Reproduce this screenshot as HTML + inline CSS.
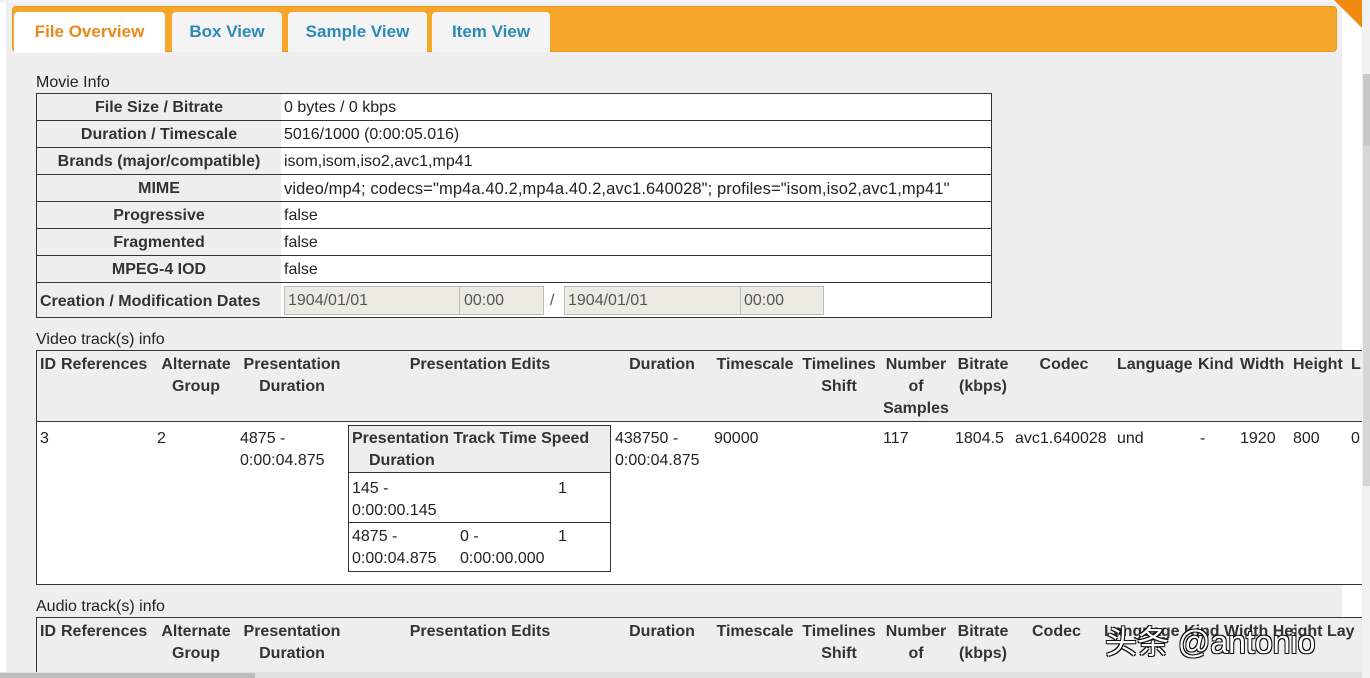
<!DOCTYPE html>
<html><head><meta charset="utf-8"><style>
*{margin:0;padding:0;box-sizing:border-box}
html,body{width:1370px;height:678px;overflow:hidden}
body{background:#fff;font-family:"Liberation Sans","DejaVu Sans",sans-serif;font-size:16px;color:#222;position:relative}
.a{position:absolute;white-space:nowrap;line-height:22px}
.b{font-weight:bold;color:#333}
.c{text-align:center}
.box{position:absolute}
</style></head><body>
<div class="box" style="left:6px;top:0;width:1336px;height:678px;background:#eeeeee"></div>
<div class="box" style="left:0;top:0;width:1370px;height:3px;background:#f4f4f4"></div>
<div class="box" style="left:12px;top:6px;width:1325px;height:46px;background:#f5a62b;border-radius:4px;border:1px solid #e59a20"></div>
<div class="box" style="left:14px;top:12px;width:151px;height:41px;background:#fff;border-radius:4px 4px 0 0"></div>
<div class="box" style="left:172px;top:12px;width:110px;height:40px;background:#f4f4f4;border-radius:4px 4px 0 0"></div>
<div class="box" style="left:288px;top:12px;width:139px;height:40px;background:#f4f4f4;border-radius:4px 4px 0 0"></div>
<div class="box" style="left:432px;top:12px;width:118px;height:40px;background:#f4f4f4;border-radius:4px 4px 0 0"></div>
<div class="a b" style="left:14px;width:151px;top:21px;text-align:center;color:#e8891a;font-size:17px">File Overview</div>
<div class="a b" style="left:172px;width:110px;top:21px;text-align:center;color:#2b8ab8;font-size:17px">Box View</div>
<div class="a b" style="left:288px;width:139px;top:21px;text-align:center;color:#2b8ab8;font-size:17px">Sample View</div>
<div class="a b" style="left:432px;width:118px;top:21px;text-align:center;color:#2b8ab8;font-size:17px">Item View</div>
<svg class="box" style="left:1330px;top:0" width="32" height="30"><polygon points="4,0 32,0 32,28" fill="#f08a10"/></svg>

<div class="a" style="left:36px;top:72px">Movie Info</div>
<div class="box" style="left:36px;top:93px;width:956px;height:225px;border:1px solid #333;background:#fff"></div>
<div class="box" style="left:37px;top:94px;width:244px;height:223px;background:#eee"></div>
<div class="box" style="left:36px;top:120px;width:956px;height:1px;background:#333"></div>
<div class="box" style="left:36px;top:147px;width:956px;height:1px;background:#333"></div>
<div class="box" style="left:36px;top:174px;width:956px;height:1px;background:#333"></div>
<div class="box" style="left:36px;top:201px;width:956px;height:1px;background:#333"></div>
<div class="box" style="left:36px;top:228px;width:956px;height:1px;background:#333"></div>
<div class="box" style="left:36px;top:255px;width:956px;height:1px;background:#333"></div>
<div class="box" style="left:36px;top:282px;width:956px;height:1px;background:#333"></div>
<div class="a b c" style="left:36px;width:246px;top:97px">File Size / Bitrate</div>
<div class="a b c" style="left:36px;width:246px;top:124px">Duration / Timescale</div>
<div class="a b c" style="left:36px;width:246px;top:151px">Brands (major/compatible)</div>
<div class="a b c" style="left:36px;width:246px;top:178px">MIME</div>
<div class="a b c" style="left:36px;width:246px;top:205px">Progressive</div>
<div class="a b c" style="left:36px;width:246px;top:232px">Fragmented</div>
<div class="a b c" style="left:36px;width:246px;top:259px">MPEG-4 IOD</div>
<div class="a b" style="left:40px;top:291px">Creation / Modification Dates</div>
<div class="a" style="left:284px;top:97px">0 bytes / 0 kbps</div>
<div class="a" style="left:284px;top:124px">5016/1000 (0:00:05.016)</div>
<div class="a" style="left:284px;top:151px">isom,isom,iso2,avc1,mp41</div>
<div class="a" style="left:284px;top:178px;font-size:16.5px;letter-spacing:0.1px">video/mp4; codecs="mp4a.40.2,mp4a.40.2,avc1.640028"; profiles="isom,iso2,avc1,mp41"</div>
<div class="a" style="left:284px;top:205px">false</div>
<div class="a" style="left:284px;top:232px">false</div>
<div class="a" style="left:284px;top:259px">false</div>
<div class="box" style="left:284px;top:286px;width:176px;height:29px;background:#ebebe4;border:1px solid #bbb"></div>
<div class="box" style="left:459px;top:286px;width:85px;height:29px;background:#ebebe4;border:1px solid #bbb"></div>
<div class="box" style="left:564px;top:286px;width:177px;height:29px;background:#ebebe4;border:1px solid #bbb"></div>
<div class="box" style="left:740px;top:286px;width:84px;height:29px;background:#ebebe4;border:1px solid #bbb"></div>
<div class="a" style="left:288px;top:290px;color:#555">1904/01/01</div>
<div class="a" style="left:464px;top:290px;color:#555">00:00</div>
<div class="a" style="left:550px;top:290px;color:#555">/</div>
<div class="a" style="left:568px;top:290px;color:#555">1904/01/01</div>
<div class="a" style="left:744px;top:290px;color:#555">00:00</div>

<div class="a" style="left:36px;top:329px">Video track(s) info</div>
<div class="box" style="left:36px;top:350px;width:1340px;height:235px;border:1px solid #333;background:#fff"></div>
<div class="box" style="left:37px;top:351px;width:1325px;height:70px;background:#eee"></div>
<div class="box" style="left:36px;top:421px;width:1326px;height:1px;background:#333"></div>
<div class="a b" style="left:40px;top:354px">ID</div>
<div class="a b" style="left:61px;top:354px">References</div>
<div class="a b c" style="left:156px;width:80px;top:354px">Alternate<br>Group</div>
<div class="a b c" style="left:238px;width:108px;top:354px">Presentation<br>Duration</div>
<div class="a b c" style="left:350px;width:260px;top:354px">Presentation Edits</div>
<div class="a b c" style="left:614px;width:96px;top:354px">Duration</div>
<div class="a b c" style="left:712px;width:86px;top:354px">Timescale</div>
<div class="a b c" style="left:798px;width:82px;top:354px">Timelines<br>Shift</div>
<div class="a b c" style="left:882px;width:68px;top:354px">Number<br>of<br>Samples</div>
<div class="a b c" style="left:952px;width:62px;top:354px">Bitrate<br>(kbps)</div>
<div class="a b c" style="left:1014px;width:100px;top:354px">Codec</div>
<div class="a b" style="left:1117px;top:354px">Language</div>
<div class="a b" style="left:1198px;top:354px">Kind</div>
<div class="a b" style="left:1240px;top:354px">Width</div>
<div class="a b" style="left:1293px;top:354px">Height</div>
<div class="a b" style="left:1351px;top:354px">L</div>

<div class="a" style="left:40px;top:428px">3</div>
<div class="a" style="left:157px;top:428px">2</div>
<div class="a" style="left:240px;top:428px">4875 -<br>0:00:04.875</div>
<div class="box" style="left:348px;top:425px;width:263px;height:147px;border:1px solid #333;background:#fff"></div>
<div class="box" style="left:349px;top:426px;width:261px;height:46px;background:#eee"></div>
<div class="box" style="left:348px;top:472px;width:263px;height:1px;background:#333"></div>
<div class="box" style="left:348px;top:522px;width:263px;height:1px;background:#333"></div>
<div class="a b" style="left:352px;top:428px">Presentation Track Time Speed</div>
<div class="a b" style="left:369px;top:450px">Duration</div>
<div class="a" style="left:352px;top:478px">145 -<br>0:00:00.145</div>
<div class="a" style="left:558px;top:478px">1</div>
<div class="a" style="left:352px;top:526px">4875 -<br>0:00:04.875</div>
<div class="a" style="left:460px;top:526px">0 -<br>0:00:00.000</div>
<div class="a" style="left:558px;top:526px">1</div>
<div class="a" style="left:615px;top:428px">438750 -<br>0:00:04.875</div>
<div class="a" style="left:714px;top:428px">90000</div>
<div class="a" style="left:883px;top:428px">117</div>
<div class="a" style="left:955px;top:428px">1804.5</div>
<div class="a" style="left:1015px;top:428px">avc1.640028</div>
<div class="a" style="left:1117px;top:428px">und</div>
<div class="a" style="left:1200px;top:428px">-</div>
<div class="a" style="left:1240px;top:428px">1920</div>
<div class="a" style="left:1293px;top:428px">800</div>
<div class="a" style="left:1351px;top:428px">0</div>

<div class="a" style="left:36px;top:596px">Audio track(s) info</div>
<div class="box" style="left:36px;top:617px;width:1340px;height:61px;border:1px solid #333;border-bottom:none;background:#eee"></div>
<div class="a b" style="left:40px;top:621px">ID</div>
<div class="a b" style="left:61px;top:621px">References</div>
<div class="a b c" style="left:156px;width:80px;top:621px">Alternate<br>Group</div>
<div class="a b c" style="left:238px;width:108px;top:621px">Presentation<br>Duration</div>
<div class="a b c" style="left:350px;width:260px;top:621px">Presentation Edits</div>
<div class="a b c" style="left:614px;width:96px;top:621px">Duration</div>
<div class="a b c" style="left:712px;width:86px;top:621px">Timescale</div>
<div class="a b c" style="left:798px;width:82px;top:621px">Timelines<br>Shift</div>
<div class="a b c" style="left:882px;width:68px;top:621px">Number<br>of</div>
<div class="a b c" style="left:952px;width:62px;top:621px">Bitrate<br>(kbps)</div>
<div class="a b" style="left:1032px;top:621px">Codec</div>
<div class="a b" style="left:1104px;top:621px">Language Kind Width Height Lay</div>
<div class="a" style="left:1105px;top:622px;font-size:32px;line-height:40px;color:#fff;font-family:'Liberation Sans','Noto Sans CJK SC',sans-serif;text-shadow:-1px -1px 0 #111,1px -1px 0 #111,-1px 1px 0 #111,1px 1px 0 #111">头条 @antonio</div>

<div class="box" style="left:1362px;top:0;width:8px;height:678px;background:#f2f2f2"></div>
<div class="box" style="left:1363px;top:74px;width:7px;height:72px;background:#c8c8c8"></div>
<div class="box" style="left:1363px;top:146px;width:7px;height:340px;background:#d6d6d6"></div>
<div class="box" style="left:0;top:672px;width:1362px;height:6px;background:#e0e0e0"></div>
<div class="box" style="left:0;top:673px;width:255px;height:5px;background:#bdbdbd"></div>
</body></html>
